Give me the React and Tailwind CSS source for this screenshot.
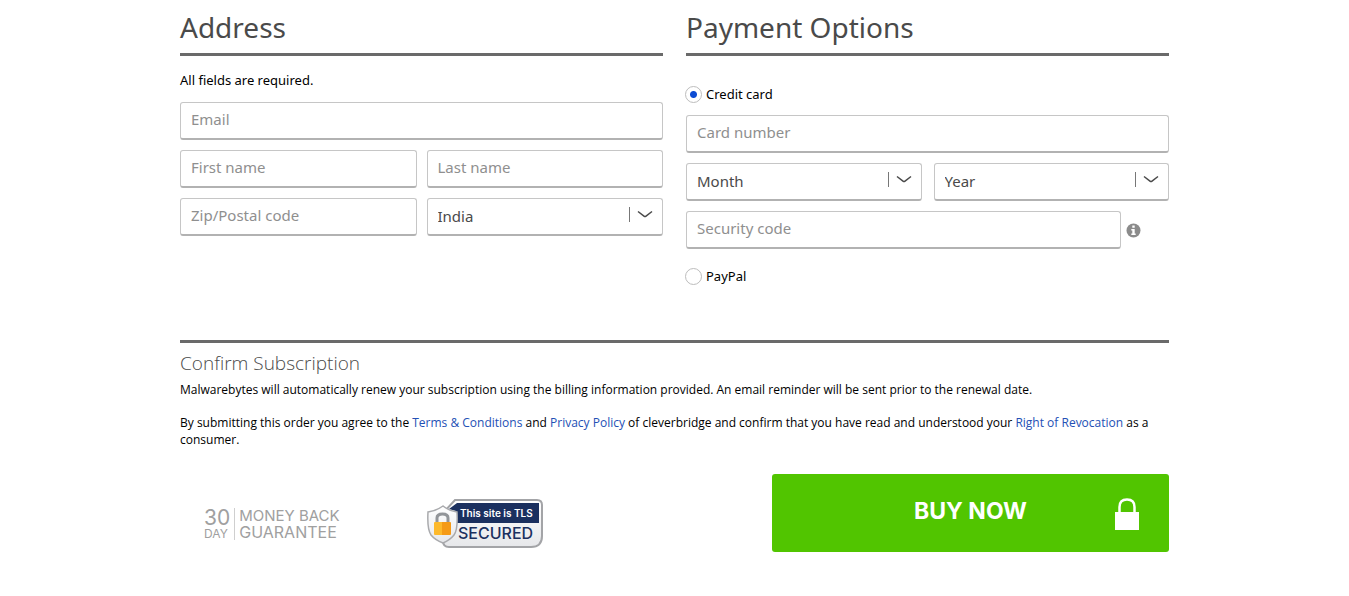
import { useState } from "react";

const fieldClass =
  "block w-full min-w-0 h-[38px] px-[10px] pb-1 rounded-[3px] border border-b-2 border-[#c6c6c6] border-b-[#b2b2b2] bg-white text-[15px] placeholder:text-[#8f8f8f] outline-none focus:border-[#0d4cd3]";

function TextField({ id, label, type = "text" }) {
  return (
    <div className="min-w-0 flex-1">
      <input id={id} type={type} aria-label={label} placeholder={label} className={fieldClass} />
    </div>
  );
}

function SelectField({ id, label, options }) {
  return (
    <div className="relative min-w-0 flex-1">
      <select
        id={id}
        aria-label={label}
        className="block w-full h-[38px] appearance-none px-[10px] rounded-[3px] border border-b-2 border-[#c6c6c6] border-b-[#b2b2b2] bg-white text-[15px] text-[#4a4a4a] outline-none"
      >
        {options.map((option) => (
          <option key={option}>{option}</option>
        ))}
      </select>
      <svg
        className="pointer-events-none absolute right-[10px] top-[9px]"
        width="24" height="16" viewBox="0 0 24 16" fill="none"
      >
        <path d="M0.500 0V15" stroke="#777" />
        <path d="M9 4.500L15.300 9.300Q16 9.800 16.700 9.300L23 4.500" stroke="#4a4a4a" strokeWidth="1.500" />
      </svg>
    </div>
  );
}

function PaymentRadio({ value, label, selected, onChange }) {
  return (
    <label className="-ml-px flex items-center gap-1 text-[13px] leading-5 text-black">
      <input
        type="radio"
        name="payment"
        value={value}
        checked={selected === value}
        onChange={() => onChange(value)}
        className="size-[17px] shrink-0 appearance-none rounded-full border border-[#bdbdbd] bg-white checked:bg-[radial-gradient(circle,#0d4cd3_3px,white_4px)]"
      />
      {label}
    </label>
  );
}

function MoneyBack() {
  return (
    <div className="flex h-9 w-[137px] items-center whitespace-nowrap font-['Inter',sans-serif] text-[#a0a0a0]">
      <div className="border-r border-[#cfcfcf] pr-1">
        <p className="text-[21px] leading-5">30</p>
        <p className="text-xs leading-3">DAY</p>
      </div>
      <div className="pl-1 leading-4">
        <p className="text-[15px] leading-4">MONEY BACK</p>
        <p className="text-base leading-4">GUARANTEE</p>
      </div>
    </div>
  );
}

function TlsBadge() {
  return (
    <svg width="116" height="50" viewBox="0 0 116 50" role="img" aria-label="This site is TLS secured">
      <defs>
        <linearGradient id="plate" x1="0" y1="0" x2="0" y2="1">
          <stop offset="0" stopColor="#ffffff" />
          <stop offset="1" stopColor="#e6e7ea" />
        </linearGradient>
        <linearGradient id="gold" x1="0" y1="0" x2="1" y2="0">
          <stop offset="0.5" stopColor="#fdb92b" />
          <stop offset="0.5" stopColor="#f59a16" />
        </linearGradient>
      </defs>
      <path
        d="M28 1H110Q115 1 115 6V37Q115 48 104 48H22Q16 48 16 42V14Z"
        fill="url(#plate)" stroke="#a3a4a7" strokeWidth="2"
      />
      <path d="M30 4H112V24H30Q30 17 29 12L22 10Z" fill="#1b305f" />
      <path
        d="M16 7Q22 12 30 13Q31 31 27 36Q23 41 16 44Q8 41 4 36Q0 30 1 13Q9 12 16 7Z"
        fill="url(#plate)" stroke="#a9aaad" strokeWidth="1.500"
      />
      <path d="M10 25V19Q10 15 15.500 15Q21 15 21 19V25" fill="none" stroke="#929599" strokeWidth="3" />
      <rect x="7" y="23" width="17" height="13" rx="1" fill="url(#gold)" />
      <text x="33" y="18" fontSize="10" fontWeight="600" fill="#fff" fontFamily="Inter, sans-serif">This site is TLS</text>
      <text x="31" y="40" fontSize="16" fontWeight="500" fill="#1b305f" fontFamily="Inter, sans-serif">SECURED</text>
    </svg>
  );
}

function SectionTitle({ children }) {
  return (
    <h2 className="h-14 border-b-3 border-[#6a6a6a] pt-2 text-[28px] leading-[38px] text-[#4a4a4a]">
      {children}
    </h2>
  );
}

export default function App() {
  const [payment, setPayment] = useState("card");

  return (
    <form
      className="mx-auto max-w-[989px] font-['Noto_Sans',sans-serif] text-black"
      onSubmit={(e) => e.preventDefault()}
    >
      <div className="grid grid-cols-2 gap-[23px]">
        {/* Address */}
        <section>
          <SectionTitle>Address</SectionTitle>
          <p className="pt-[14px] pb-3 text-[13px] leading-5">All fields are required.</p>
          <div className="flex flex-col gap-[10px]">
            <TextField id="email" label="Email" type="email" />
            <div className="flex gap-[10px]">
              <TextField id="first" label="First name" />
              <TextField id="last" label="Last name" />
            </div>
            <div className="flex gap-[10px]">
              <TextField id="zip" label="Zip/Postal code" />
              <SelectField id="country" label="Country" options={["India", "Germany", "United States"]} />
            </div>
          </div>
        </section>

        {/* Payment */}
        <section>
          <SectionTitle>Payment Options</SectionTitle>
          <div className="pt-7 pb-[11px]">
            <PaymentRadio value="card" label="Credit card" selected={payment} onChange={setPayment} />
          </div>
          <div className="flex flex-col gap-[10px]">
            <TextField id="card" label="Card number" />
            <div className="flex gap-3">
              <SelectField id="month" label="Expiry month" options={["Month", "01", "02", "03", "04", "05", "06", "07", "08", "09", "10", "11", "12"]} />
              <SelectField id="year" label="Expiry year" options={["Year", "2025", "2026", "2027", "2028"]} />
            </div>
            <div className="flex items-center">
              <TextField id="cvc" label="Security code" />
              <button type="button" aria-label="About the security code" className="ml-[5px] mr-7">
                <svg width="15" height="15" viewBox="0 0 15 15" className="block">
                  <circle cx="7.500" cy="7.500" r="7" fill="#8b8b8b" />
                  <path d="M6.300 2.500H8.700V4.700H6.300ZM5.300 6H8.700V10.500H9.700V12H5.300V10.500H6.300V7.400H5.300Z" fill="#fff" />
                </svg>
              </button>
            </div>
          </div>
          <div className="pt-[17px]">
            <PaymentRadio value="paypal" label="PayPal" selected={payment} onChange={setPayment} />
          </div>
        </section>
      </div>

      {/* Confirmation */}
      <section className="mt-[54px] border-t-3 border-[#6a6a6a] pt-[6px] font-['Open_Sans',sans-serif]">
        <h3 className="text-[19px] leading-7 font-light text-[#4a4a4a]">Confirm Subscription</h3>
        <p className="mt-1 text-xs leading-[17px]">
          Malwarebytes will automatically renew your subscription using the billing information provided. An email
          reminder will be sent prior to the renewal date.
        </p>
        <p className="mt-4 text-xs leading-[17px]">
          By submitting this order you agree to the{" "}
          <a href="#terms" className="text-[#2350b5]">Terms &amp; Conditions</a> and{" "}
          <a href="#privacy" className="text-[#2350b5]">Privacy Policy</a> of cleverbridge and confirm that you have
          read and understood your{" "}
          <a href="#revocation" className="text-[#2350b5]">Right of Revocation</a> as a consumer.
        </p>
      </section>

      <div className="mt-[26px] flex items-center">
        <div className="flex flex-1 items-center gap-[86px] pl-6 pt-[22px]">
          <MoneyBack />
          <TlsBadge />
        </div>
        <button
          type="submit"
          className="grid h-[78px] w-[397px] grid-cols-[1fr_auto_1fr] items-center rounded-[3px] bg-[#51c500] font-['Inter',sans-serif] text-[23px] font-bold text-white"
        >
          <span className="col-start-2 pb-1">BUY NOW</span>
          <svg width="24" height="32" viewBox="0 0 24 32" className="mr-[30px] mt-[2px] justify-self-end">
            <path d="M4.500 16V9Q4.500 1.500 12 1.500Q19.500 1.500 19.500 9V16" fill="none" stroke="#fff" strokeWidth="2.500" />
            <rect y="14" width="24" height="18" fill="#fff" />
          </svg>
        </button>
      </div>
    </form>
  );
}
